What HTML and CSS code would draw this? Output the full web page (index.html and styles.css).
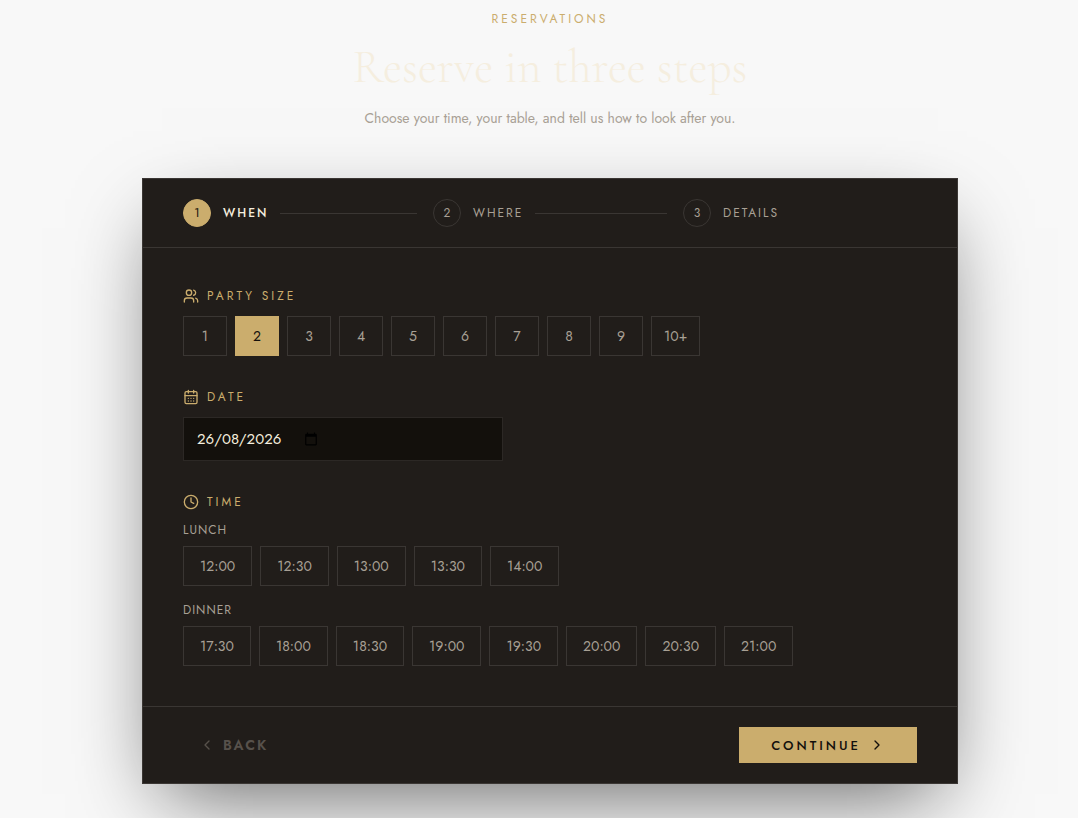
FILE: index.html
```
<!DOCTYPE html>
<html lang="en-GB">

<head>
    <meta charset="UTF-8">
    <meta name="viewport" content="width=device-width, initial-scale=1.0">
    <title>Reservations</title>
    <link rel="stylesheet" href="styles.css">
</head>

<body>
    <main class="page">
        <header class="intro">
            <p class="eyebrow">Reservations</p>
            <h1>Reserve in three steps</h1>
            <p class="lead">Choose your time, your table, and tell us how to look after you.</p>
        </header>

        <form class="card">
            <ol class="steps">
                <li class="step active"><span class="step-number">1</span><span class="step-name">When</span></li>
                <li class="step"><span class="step-number">2</span><span class="step-name">Where</span></li>
                <li class="step"><span class="step-number">3</span><span class="step-name">Details</span></li>
            </ol>

            <div class="card-body">
                <section class="field">
                    <h2 class="field-label">
                        <svg class="icon" viewBox="0 0 24 24"><path d="M16 21v-2a4 4 0 0 0-4-4H6a4 4 0 0 0-4 4v2"/><circle cx="9" cy="7" r="4"/><path d="M22 21v-2a4 4 0 0 0-3-3.87"/><path d="M16 3.13a4 4 0 0 1 0 7.75"/></svg>
                        Party size
                    </h2>
                    <div class="options">
                        <button type="button" class="option">1</button>
                        <button type="button" class="option selected">2</button>
                        <button type="button" class="option">3</button>
                        <button type="button" class="option">4</button>
                        <button type="button" class="option">5</button>
                        <button type="button" class="option">6</button>
                        <button type="button" class="option">7</button>
                        <button type="button" class="option">8</button>
                        <button type="button" class="option">9</button>
                        <button type="button" class="option">10+</button>
                    </div>
                </section>

                <section class="field">
                    <label class="field-label" for="date">
                        <svg class="icon" viewBox="0 0 24 24"><path d="M8 2v4M16 2v4"/><rect x="3" y="4" width="18" height="18" rx="2"/><path d="M3 10h18M8 14h.01M12 14h.01M16 14h.01M8 18h.01M12 18h.01M16 18h.01"/></svg>
                        Date
                    </label>
                    <div class="date-input">
                        <input type="text" id="date" inputmode="numeric" value="26/08/2026">
                        <button type="button" aria-label="Open calendar">
                            <svg viewBox="0 0 24 24"><path d="M20 3h-1V1h-2v2H7V1H5v2H4c-1.1 0-2 .9-2 2v16c0 1.1.9 2 2 2h16c1.1 0 2-.9 2-2V5c0-1.1-.9-2-2-2zm0 18H4V8h16v13z"/></svg>
                        </button>
                    </div>
                </section>

                <section class="field">
                    <h2 class="field-label">
                        <svg class="icon" viewBox="0 0 24 24"><circle cx="12" cy="12" r="10"/><path d="M12 6v6l4 2"/></svg>
                        Time
                    </h2>
                    <h3 class="service">Lunch</h3>
                    <div class="options times">
                        <button type="button" class="option">12:00</button>
                        <button type="button" class="option">12:30</button>
                        <button type="button" class="option">13:00</button>
                        <button type="button" class="option">13:30</button>
                        <button type="button" class="option">14:00</button>
                    </div>
                    <h3 class="service">Dinner</h3>
                    <div class="options times">
                        <button type="button" class="option">17:30</button>
                        <button type="button" class="option">18:00</button>
                        <button type="button" class="option">18:30</button>
                        <button type="button" class="option">19:00</button>
                        <button type="button" class="option">19:30</button>
                        <button type="button" class="option">20:00</button>
                        <button type="button" class="option">20:30</button>
                        <button type="button" class="option">21:00</button>
                    </div>
                </section>
            </div>

            <footer class="actions">
                <button type="button" class="back" disabled>
                    <svg class="icon" viewBox="0 0 24 24"><path d="m15 18-6-6 6-6"/></svg>
                    Back
                </button>
                <button type="submit" class="continue">
                    Continue
                    <svg class="icon" viewBox="0 0 24 24"><path d="m9 18 6-6-6-6"/></svg>
                </button>
            </footer>
        </form>
    </main>
</body>

</html>
```

FILE: styles.css
```
* {
    box-sizing: border-box;
}

body {
    margin: 0;
    padding: 9px 0 34px 22px;
    background-color: #f8f8f8;
    color: #a8a095;
    font-family: Jost, Lato, sans-serif;
    font-size: 14px;
}

h1,
h2,
h3,
p,
ol {
    margin: 0;
    padding: 0;
}

button,
input {
    font-family: inherit;
    font-size: 14px;
}

.page {
    max-width: 816px;
    margin: 0 auto;
}

.intro {
    margin-bottom: 48px;
    text-align: center;
}

.eyebrow {
    color: #cbad6d;
    font-size: 12px;
    line-height: 20px;
    letter-spacing: 3px;
    text-transform: uppercase;
}

.intro h1 {
    margin: 11px 0 13px;
    color: #f5eedf;
    font-family: "Cormorant Garamond", "Liberation Serif", serif;
    font-size: 47px;
    font-weight: 300;
    line-height: 54px;
}

.lead {
    line-height: 23px;
}

.card {
    background-color: #211d1a;
    border: 1px solid #3a3633;
    box-shadow: 0 30px 80px -20px rgba(0, 0, 0, 0.6);
}

.icon {
    width: 16px;
    height: 16px;
    flex-shrink: 0;
    fill: none;
    stroke: currentColor;
    stroke-width: 2;
    stroke-linecap: round;
    stroke-linejoin: round;
}

/* steps */

.steps {
    display: flex;
    gap: 16px;
    padding: 20px 40px;
    border-bottom: 1px solid #3a3633;
    list-style: none;
}

.step {
    display: flex;
    flex: 1;
    align-items: center;
    gap: 12px;
    font-size: 12px;
}

.step:not(:last-child)::after {
    content: "";
    flex: 1;
    height: 1px;
    background-color: #3a3633;
}

.step-number {
    display: flex;
    align-items: center;
    justify-content: center;
    width: 28px;
    height: 28px;
    border: 1px solid #3a3633;
    border-radius: 50%;
}

.step-name {
    letter-spacing: 2px;
    text-transform: uppercase;
}

.step.active {
    color: #f5eedf;
}

.active .step-name {
    font-weight: 500;
}

.active .step-number {
    background-color: #cbad6d;
    border-color: #cbad6d;
    color: #13100c;
}

/* fields */

.card-body {
    display: flex;
    flex-direction: column;
    gap: 32px;
    padding: 39px 40px 40px;
}

.field-label {
    display: flex;
    align-items: center;
    gap: 8px;
    height: 17px;
    margin-bottom: 12px;
    color: #cbad6d;
    font-size: 12px;
    font-weight: 400;
    line-height: 16px;
    letter-spacing: 3px;
    text-transform: uppercase;
}

.options {
    display: flex;
    flex-wrap: wrap;
    gap: 8px;
}

.option {
    min-width: 44px;
    height: 40px;
    padding: 0 12px;
    background: none;
    border: 1px solid #3a3633;
    color: #a8a095;
    cursor: pointer;
}

.option.selected {
    background-color: #cbad6d;
    border-color: #cbad6d;
    color: #13100c;
}

.times .option {
    padding: 0 16px;
}

.date-input {
    display: flex;
    align-items: center;
    gap: 8px;
    max-width: 320px;
    height: 44px;
    padding: 0 13px;
    background-color: #13100c;
    border: 1px solid #2c2825;
}

.date-input input {
    width: 99px;
    padding: 0;
    background: none;
    border: none;
    color: #f5eedf;
    font-size: 15px;
}

.date-input button {
    display: flex;
    padding: 0;
    background: none;
    border: none;
    color: #000;
    cursor: pointer;
}

.date-input svg {
    width: 14px;
    height: 14px;
    fill: currentColor;
}

.service {
    margin-bottom: 8px;
    font-size: 12px;
    font-weight: 400;
    line-height: 16px;
    letter-spacing: 1px;
    text-transform: uppercase;
}

.times + .service {
    margin-top: 16px;
}

/* actions */

.actions {
    display: flex;
    justify-content: space-between;
    padding: 20px 40px;
    border-top: 1px solid #3a3633;
}

.actions button {
    display: flex;
    align-items: center;
    gap: 8px;
    height: 36px;
    border: none;
    text-transform: uppercase;
    cursor: pointer;
}

.back {
    padding: 0 16px;
    background: none;
    color: #a8a095;
    font-weight: 600;
    letter-spacing: 2px;
}

.back:disabled {
    opacity: 0.4;
    cursor: default;
}

.continue {
    padding: 0 32px;
    background-color: #cbad6d;
    color: #13100c;
    font-size: 13px;
    font-weight: 500;
    letter-spacing: 3px;
}
```
